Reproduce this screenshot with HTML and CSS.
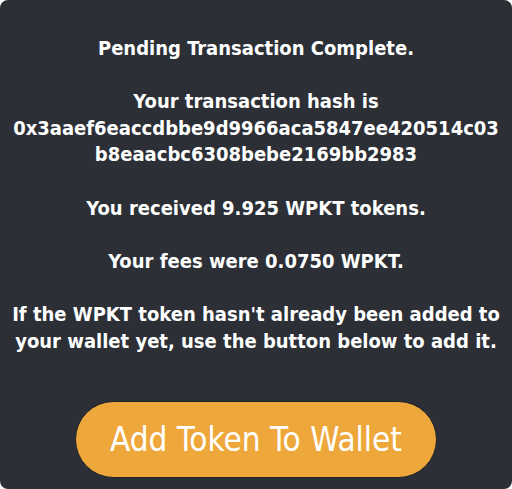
FILE: index.html
```html
<!DOCTYPE html>
<html>
<head>
<meta charset="utf-8">
<link rel="stylesheet" href="styles.css">
</head>
<body>
<div class="card">
  <div class="message">
    <p>Pending Transaction Complete.</p>
    <p>Your transaction hash is<br><span class="hash">0x3aaef6eaccdbbe9d9966aca5847ee420514c03<br>b8eaacbc6308bebe2169bb2983</span></p>
    <p>You received 9.925 WPKT tokens.</p>
    <p>Your fees were 0.0750 WPKT.</p>
    <p>If the WPKT token hasn't already been added to<br>your wallet yet, use the button below to add it.</p>
  </div>
  <button class="add-btn">Add Token To Wallet</button>
</div>
</body>
</html>
```
FILE: styles.css
```css
html, body {
  margin: 0;
  padding: 0;
  background: #ffffff;
}
.card {
  width: 512px;
  height: 489px;
  box-sizing: border-box;
  background: #2c2f36;
  border-radius: 8px;
  display: flex;
  flex-direction: column;
  align-items: center;
  padding-top: 35px;
  font-family: "DejaVu Sans Condensed", "DejaVu Sans", sans-serif;
  font-stretch: condensed;
  color: #ffffff;
}
.message {
  text-align: center;
  font-weight: bold;
  font-size: 20px;
  line-height: 26.6px;
}
.message p {
  margin: 0 0 26.6px 0;
}
.message p:last-child {
  margin-bottom: 0;
}
.add-btn {
  margin-top: 47px;
  width: 362px;
  height: 77px;
  border-radius: 39px;
  background: #eea73a;
  border: 1px solid #1f2228;
  color: #ffffff;
  font-family: "DejaVu Sans Condensed", "DejaVu Sans", sans-serif;
  font-stretch: condensed;
  font-size: 33px;
  font-weight: normal;
  padding: 0;
}
```
